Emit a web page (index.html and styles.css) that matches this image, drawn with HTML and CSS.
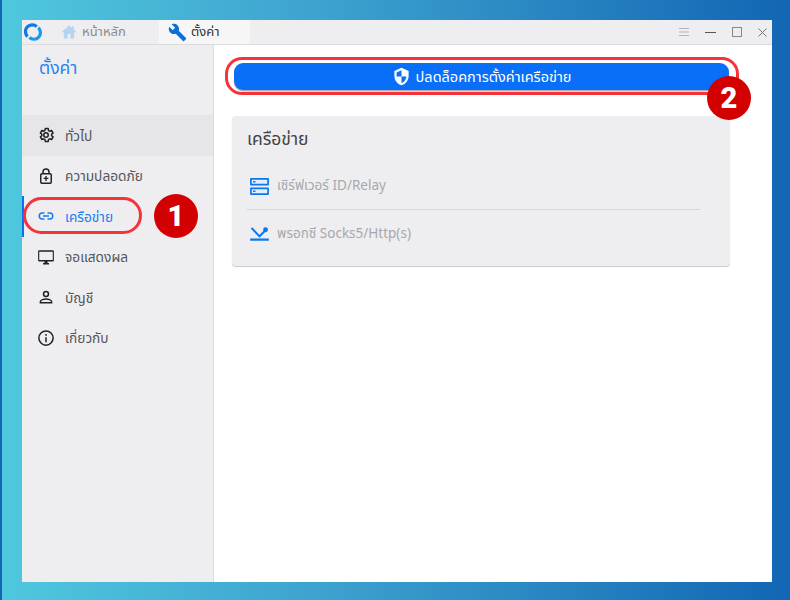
FILE: index.html
```html
<!DOCTYPE html>
<html lang="th">
<head>
<meta charset="utf-8">
<title>ตั้งค่า</title>
<link rel="stylesheet" href="styles.css">
</head>
<body>
<div class="window">
  <header class="titlebar">
    <svg class="logo" viewBox="0 0 18 18" width="18" height="18"><path d="M3.600 13.500A6.400 6.400 0 0 1 12.800 3.600" fill="none" stroke="#1478e0" stroke-width="3.200"/><path d="M14.300 4.800A6.400 6.400 0 0 1 5.400 14.500" fill="none" stroke="#1a9ae8" stroke-width="3.200"/></svg>
    <div class="tab tab-home">
      <svg viewBox="0 0 16 16" width="16" height="16"><path d="M8 1.500 .5 8.200h2.300v6.300h3.800V10h2.800v4.500h3.800V8.200h2.300L13 5.500V2.500h-2v1.200z" fill="#b4d4f2"/></svg>
      <span>หน้าหลัก</span>
    </div>
    <div class="tab tab-active">
      <svg viewBox="0 0 24 24" width="19" height="19"><path d="M22.700 19 13.600 9.900c.9-2.300.4-5-1.500-6.900-2-2-5-2.400-7.400-1.300L9 6 6 9 1.600 4.700C.4 7.100.9 10.100 2.900 12.100c1.900 1.900 4.600 2.400 6.900 1.500l9.100 9.100c.4.400 1 .4 1.400 0l2.300-2.300c.5-.4.5-1.100.1-1.400z" fill="#0a6fd8"/></svg>
      <span>ตั้งค่า</span>
    </div>
    <div class="controls">
      <svg viewBox="0 0 10 10" width="10" height="10"><path d="M0 1.500h10M0 5h10M0 8.500h10" stroke="#b5b5b8" stroke-width="1"/></svg>
      <svg viewBox="0 0 11 11" width="11" height="11"><path d="M0 5.500h11" stroke="#555" stroke-width="1"/></svg>
      <svg viewBox="0 0 10 10" width="10" height="10"><rect x=".5" y=".5" width="9" height="9" fill="none" stroke="#888" stroke-width="1"/></svg>
      <svg viewBox="0 0 9 9" width="9" height="9"><path d="M.5.500l8 8M8.500.500l-8 8" stroke="#777" stroke-width="1"/></svg>
    </div>
  </header>
  <div class="body">
    <aside class="sidebar">
      <h1 class="side-title">ตั้งค่า</h1>
      <nav class="menu">
        <a class="item hover">
          <svg viewBox="0 0 24 24" width="18" height="18"><path d="M19.400 13c.1-.3.1-.7.1-1s0-.7-.1-1l2-1.600-2-3.400-2.400 1a7 7 0 0 0-1.700-1L15 3.400h-4l-.4 2.600c-.6.2-1.200.6-1.700 1l-2.400-1-2 3.400 2 1.600c-.1.3-.1.700-.1 1s0 .7.1 1l-2 1.600 2 3.400 2.400-1c.5.4 1.100.8 1.700 1l.4 2.600h4l.4-2.600c.6-.2 1.200-.6 1.700-1l2.400 1 2-3.400z" fill="none" stroke="#222" stroke-width="2" stroke-linejoin="round"/><circle cx="12" cy="12" r="3" fill="none" stroke="#222" stroke-width="2"/></svg>
          <span>ทั่วไป</span>
        </a>
        <a class="item">
          <svg viewBox="0 0 24 24" width="18" height="18"><path d="M8 9V6.500a4 4 0 0 1 8 0V9" fill="none" stroke="#222" stroke-width="2"/><rect x="5" y="9" width="14" height="12.500" rx="1.500" fill="none" stroke="#222" stroke-width="2"/><path d="M12 12v6.500M8.800 15.200h6.400" stroke="#222" stroke-width="1.800"/></svg>
          <span>ความปลอดภัย</span>
        </a>
        <a class="item active">
          <svg viewBox="0 0 24 24" width="18" height="18"><path d="M10 7H7a5 5 0 0 0 0 10h3v-2H7a3 3 0 0 1 0-6h3zM14 7v2h3a3 3 0 0 1 0 6h-3v2h3a5 5 0 0 0 0-10zM8 11h8v2H8z" fill="#1a7cf0"/></svg>
          <span>เครือข่าย</span>
        </a>
        <a class="item">
          <svg viewBox="0 0 24 24" width="20" height="20"><path d="M3 3h18a1.500 1.500 0 0 1 1.500 1.500v12A1.500 1.500 0 0 1 21 18H3a1.500 1.500 0 0 1-1.500-1.500v-12A1.500 1.500 0 0 1 3 3zM3 5v11h18V5zM8 20h8v2H8zM10 18h4v2h-4z" fill="#222"/></svg>
          <span>จอแสดงผล</span>
        </a>
        <a class="item">
          <svg viewBox="0 0 24 24" width="18" height="18"><circle cx="12" cy="8" r="3.300" fill="none" stroke="#222" stroke-width="2"/><path d="M4.500 19.500v-1.300c0-2.400 5-3.500 7.500-3.500s7.500 1.100 7.500 3.500v1.300z" fill="none" stroke="#222" stroke-width="2"/></svg>
          <span>บัญชี</span>
        </a>
        <a class="item">
          <svg viewBox="0 0 24 24" width="18" height="18"><circle cx="12" cy="12" r="9.500" fill="none" stroke="#222" stroke-width="2"/><path d="M11 11h2v6.500h-2zM11 6.800h2v2.200h-2z" fill="#222"/></svg>
          <span>เกี่ยวกับ</span>
        </a>
      </nav>
    </aside>
    <main class="content">
      <button class="unlock">
        <svg viewBox="0 0 24 24" width="19" height="19"><path d="M12 1 3 5v6c0 5.500 3.800 10.700 9 12 5.200-1.300 9-6.500 9-12V5z" fill="#fff"/><path d="M12 4v8H5.800V6.800zM12 12h6.200c-.5 3.900-3 7.300-6.200 8.300z" fill="#0a6ff0"/></svg>
        <span class="unlock-label">ปลดล็อคการตั้งค่าเครือข่าย</span>
      </button>
      <section class="card">
        <h2 class="card-title">เครือข่าย</h2>
        <div class="row row-first">
          <svg viewBox="0 0 20 18" width="19" height="17"><path d="M1 0h18a1 1 0 0 1 1 1v6a1 1 0 0 1-1 1H1a1 1 0 0 1-1-1V1a1 1 0 0 1 1-1zM1 10h18a1 1 0 0 1 1 1v6a1 1 0 0 1-1 1H1a1 1 0 0 1-1-1v-6a1 1 0 0 1 1-1z" fill="#0a76f0"/><path d="M1.800 1.800h16.400v4.400H1.800zM1.800 11.800h16.400v4.400H1.800z" fill="#e6eef8"/><path d="M3.200 3.300h2.500v1.400H3.200zM3.200 13.300h2.500v1.400H3.200z" fill="#0a76f0"/></svg>
          <span>เซิร์ฟเวอร์ ID/Relay</span>
        </div>
        <div class="row row-split">
          <svg viewBox="0 0 20 15" width="19" height="14"><path d="M1.500 1 10 10l6.500-6.500" fill="none" stroke="#0a76f0" stroke-width="2.200"/><path d="M0 13.500h20" stroke="#0a76f0" stroke-width="2.400"/><circle cx="16.500" cy="3" r="2.600" fill="#0a76f0"/></svg>
          <span>พรอกซี Socks5/Http(s)</span>
        </div>
      </section>
    </main>
  </div>
  <span class="oval oval-net"></span>
  <span class="oval oval-btn"></span>
  <span class="badge badge-1">1</span>
  <span class="badge badge-2">2</span>
</div>
</body>
</html>
```

FILE: styles.css
```css
* { box-sizing: border-box; }
html, body { margin: 0; height: 100%; }
body {
  width: 790px;
  height: 600px;
  overflow: hidden;
  padding: 20px 18px 18px 20px;
  background: linear-gradient(90deg, #4fc8de 0%, #3ea3cf 40%, #1266b4 100%);
  border-left: 2px solid #1266b4;
  font-family: "Noto Sans", "Noto Sans Thai", "Open Sans", "DejaVu Sans", sans-serif;
  font-size: 13px;
}
.window {
  position: relative;
  width: 750px;
  height: 562px;
  display: flex;
  flex-direction: column;
  background: #fff;
}
.titlebar {
  height: 25px;
  flex: none;
  display: flex;
  align-items: stretch;
  background: #eeeef0;
  border-bottom: 1px solid #dcdcde;
}
.logo { align-self: center; margin-left: 2px; margin-top: -1px; }
.tab {
  display: flex;
  align-items: center;
  gap: 5px;
  font-size: 13px;
}
.tab-home { width: 117px; padding-left: 19px; color: #8a8a8e; }
.tab-active { width: 91px; padding-left: 9px; gap: 4px; color: #333; background: #f6f6f7; }
.controls {
  margin-left: auto;
  display: flex;
  align-items: center;
  gap: 16px;
  padding-right: 5px;
}
.body { flex: 1; display: flex; min-height: 0; }
.sidebar {
  width: 192px;
  flex: none;
  background: #eeeef0;
  border-right: 1px solid #dcdcde;
}
.side-title {
  margin: 0;
  padding: 8px 0 0 17px;
  height: 70px;
  font-size: 17.500px;
  font-weight: 400;
  line-height: 28px;
  color: #2a83f0;
}
.menu { display: flex; flex-direction: column; }
.item {
  height: 40.500px;
  display: flex;
  align-items: center;
  gap: 10px;
  padding: 2px 0 0 15px;
  color: #55555a;
  font-size: 13.700px;
}
.item svg { width: 18px; flex: none; margin-top: -2px; }
.item.hover { background: #e6e6e8; }
.item.active { color: #1a7cf0; box-shadow: inset 2px 0 0 #0a6ff0; }
.content {
  flex: 1;
  min-width: 0;
  padding: 18px 42px 0 18px;
}
.unlock {
  width: 495px;
  height: 27px;
  margin: 0 0 0 2px;
  padding: 0;
  border: 0;
  border-radius: 9px;
  display: flex;
  align-items: center;
  justify-content: center;
  gap: 5px;
  background: #0a6ff8;
  box-shadow: 0 1.500px 0 #b0b0b4;
  color: #fff;
  font: inherit;
  font-size: 14.500px;
}
.unlock-label { padding-top: 2px; }
.card {
  margin-top: 26px;
  height: 150px;
  padding: 0 30px 0 15px;
  border-radius: 4px;
  background: #eeeef0;
  box-shadow: 0 1px 1px #c8c8cb;
}
.card-title {
  margin: 0;
  padding-top: 10px;
  height: 46px;
  font-size: 17.500px;
  font-weight: 400;
  line-height: 24px;
  color: #444;
}
.row {
  height: 47px;
  display: flex;
  align-items: center;
  gap: 8px;
  padding-left: 3px;
  color: #a8a8ac;
  font-size: 13.500px;
}
.row-first { padding-top: 1px; }
.row-split { border-top: 1px solid #d6d6d8; padding-top: 1px; }
.oval {
  position: absolute;
  border: 3px solid #f5333b;
  background: transparent;
}
.oval-net { left: 1px; top: 177px; width: 119px; height: 37px; border-radius: 19px; }
.oval-btn { left: 203px; top: 37px; width: 514px; height: 38px; border-radius: 17px; }
.badge {
  position: absolute;
  width: 44px;
  height: 44px;
  border-radius: 50%;
  background: #d20000;
  color: #fff;
  font-family: Roboto, "Liberation Sans", sans-serif;
  font-size: 29px;
  font-weight: 900;
  line-height: 44px;
  text-align: center;
}
.badge-1 { left: 132px; top: 174px; }
.badge-2 { left: 685px; top: 56px; }
```
